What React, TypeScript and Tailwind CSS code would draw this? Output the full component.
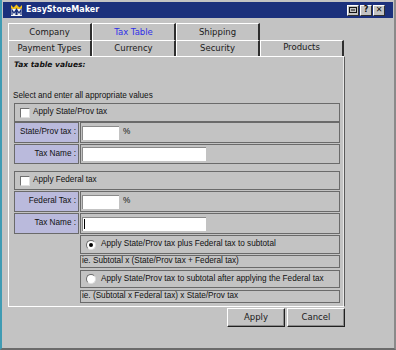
import React from "react";

const tabFont = "font-['DejaVu_Sans',sans-serif] text-[8.5px]";
const formFont = "font-['Liberation_Sans',Arial,sans-serif] text-[8.2px]";

function Tab({ label, blue, front }: { label: string; blue?: boolean; front?: boolean }) {
  return (
    <div
      className={`w-[84px] h-full flex items-center justify-center border-t border-l border-t-white border-l-white border-r-2 border-r-[#2e2e2e] ${tabFont} ${
        blue ? "text-[#2f2fe8]" : "text-[#1a1a1a]"
      } ${front ? "pb-[2px]" : ""}`}
    >
      {label}
    </div>
  );
}

function Checkbox() {
  return <div className="w-[10px] h-[10px] bg-white border border-t-[#707070] border-l-[#707070] border-b-[#e0e0e0] border-r-[#e0e0e0]" />;
}

function Radio({ on }: { on?: boolean }) {
  return (
    <div className="w-[10px] h-[10px] rounded-full bg-white border border-t-[#6a6a6a] border-l-[#6a6a6a] border-b-[#dedede] border-r-[#dedede] flex items-center justify-center">
      {on && <div className="w-[4px] h-[4px] rounded-full bg-black" />}
    </div>
  );
}

function CheckRow({ label }: { label: string }) {
  return (
    <div className={`w-[326px] h-[19px] border border-[#6a6a6a] flex items-center pl-[5px] gap-[3px] ${formFont} text-[#111]`}>
      <Checkbox />
      <span>{label}</span>
    </div>
  );
}

function FieldRow({
  label,
  inputWidth,
  percent,
  cursor,
  h,
}: {
  label: string;
  inputWidth: string;
  percent?: boolean;
  cursor?: boolean;
  h: string;
}) {
  return (
    <div className={`w-[326px] ${h} flex gap-[1px] ${formFont} text-[#111]`}>
      <div className="w-[65px] h-full bg-[#babadc] border border-[#6a6a6a] flex items-center justify-end pr-[2px]">
        {label}
      </div>
      <div className="w-[260px] h-full border border-[#6a6a6a] flex items-center pl-[1px] gap-[4px]">
        <div
          className={`${inputWidth} h-[14px] bg-white border-t border-l border-t-[#8a8a8a] border-l-[#8a8a8a] flex items-center`}
        >
          {cursor && <div className="ml-[1px] w-[1px] h-[10px] bg-black" />}
        </div>
        {percent && <span>%</span>}
      </div>
    </div>
  );
}

function RadioRow({ label, on, h }: { label: string; on?: boolean; h: string }) {
  return (
    <div className={`ml-[66px] w-[260px] ${h} border border-[#6a6a6a] flex items-center pl-[5px] gap-[5px] ${formFont} text-[#111]`}>
      <Radio on={on} />
      <span>{label}</span>
    </div>
  );
}

function NoteRow({ label }: { label: string }) {
  return (
    <div className={`ml-[66px] w-[260px] h-[13px] border border-[#6a6a6a] flex items-center pl-[1px] ${formFont} text-[#111]`}>
      {label}
    </div>
  );
}

function TitleButton({ children }: { children: React.ReactNode }) {
  return (
    <div className="w-[12px] h-[11px] bg-[#c3c3c3] border border-t-white border-l-white border-b-[#303030] border-r-[#303030] flex items-center justify-center">
      {children}
    </div>
  );
}

function Button({ label }: { label: string }) {
  return (
    <div
      className={`w-[58px] h-[19px] border border-t-white border-l-white border-b-[#202020] border-r-[#202020] shadow-[inset_-1px_-1px_0_#8a8a8a] flex items-center justify-center ${tabFont} text-[#1a1a1a]`}
    >
      {label}
    </div>
  );
}

export default function App() {
  return (
    <div className="w-[396px] h-[350px] bg-[#c3c3c3] border-l-2 border-l-[#3f9bb3] border-r-2 border-r-[#8a8a8a] border-b-2 border-b-[#6b6b6b] pt-[2px] pl-[1px] pr-[1px] flex flex-col">
      {/* title bar */}
      <div className="h-[16px] bg-[#1b307c] flex items-center pl-[7px] pr-[8px]">
        <svg width="13" height="12" viewBox="0 0 13 12">
          <path d="M1 1 L3.5 3.5 L6.5 0.5 L9.5 3.5 L12 1 L12 5 L1 5 Z" fill="#f2c21b" />
          <rect x="1" y="5" width="11" height="7" fill="#f4f4f4" />
          <path d="M2 11 V6 L4 9 L6 6 V11 M7 11 V6 L9 9 L11 6 V11" stroke="#1b307c" strokeWidth="1.2" fill="none" />
        </svg>
        <span className="ml-[3px] font-['DejaVu_Sans',sans-serif] font-bold text-[8px] text-white">EasyStoreMaker</span>
        <div className="ml-auto flex gap-[1px]">
          <TitleButton>
            <svg width="8" height="6" viewBox="0 0 8 6">
              <rect x="0.5" y="0.5" width="7" height="5" fill="none" stroke="#111" />
              <path d="M2 3 H6" stroke="#111" />
            </svg>
          </TitleButton>
          <TitleButton>
            <span className="font-['DejaVu_Sans',sans-serif] font-bold text-[8px] leading-none text-[#111]">?</span>
          </TitleButton>
          <TitleButton>
            <span className="font-['DejaVu_Sans',sans-serif] font-bold text-[8px] leading-none text-[#111]">✕</span>
          </TitleButton>
        </div>
      </div>

      {/* tabs */}
      <div className="ml-[5px] mt-[5px] w-[337px] flex flex-col">
        <div className="h-[17px] flex">
          <Tab label="Company" />
          <Tab label="Tax Table" blue />
          <Tab label="Shipping" />
        </div>
        <div className="h-[16px] flex">
          <Tab label="Payment Types" />
          <Tab label="Currency" />
          <Tab label="Security" />
          <Tab label="Products" front />
        </div>
      </div>

      {/* panel */}
      <div className="ml-[5px] w-[337px] h-[251px] border border-t-white border-l-white border-r-[#5a5a5a] border-b-white shadow-[inset_-1px_0_0_#e8e8e8] flex flex-col pl-[5px]">
        <div className="mt-[2px] leading-[12px] font-['DejaVu_Sans',sans-serif] font-bold italic text-[7.5px] text-[#111]">
          Tax table values:
        </div>
        <div className={`-ml-[1px] mt-[19px] leading-[12px] ${formFont} text-[#111]`}>
          Select and enter all appropriate values
        </div>
        <div className="mt-[1px]">
          <CheckRow label="Apply State/Prov tax" />
        </div>
        <FieldRow label="State/Prov tax :" inputWidth="w-[37px]" percent h="h-[21px]" />
        <div className="mt-[1px]">
          <FieldRow label="Tax Name :" inputWidth="w-[124px]" h="h-[20px]" />
        </div>
        <div className="mt-[7px]">
          <CheckRow label="Apply Federal tax" />
        </div>
        <div className="mt-[1px]">
          <FieldRow label="Federal Tax :" inputWidth="w-[37px]" percent h="h-[21px]" />
        </div>
        <div className="mt-[1px]">
          <FieldRow label="Tax Name :" inputWidth="w-[124px]" cursor h="h-[21px]" />
        </div>
        <div className="mt-[1px]">
          <RadioRow label="Apply State/Prov tax plus Federal tax to subtotal" on h="h-[19px]" />
        </div>
        <div className="mt-[1px]">
          <NoteRow label="ie. Subtotal x (State/Prov tax + Federal tax)" />
        </div>
        <div className="mt-[2px]">
          <RadioRow label="Apply State/Prov tax to subtotal after applying the Federal tax" h="h-[18px]" />
        </div>
        <div className="mt-[2px]">
          <NoteRow label="ie. (Subtotal x Federal tax) x State/Prov tax" />
        </div>
      </div>

      {/* buttons */}
      <div className="ml-[5px] mt-[1px] w-[337px] flex justify-end gap-[2px]">
        <Button label="Apply" />
        <Button label="Cancel" />
      </div>
    </div>
  );
}
